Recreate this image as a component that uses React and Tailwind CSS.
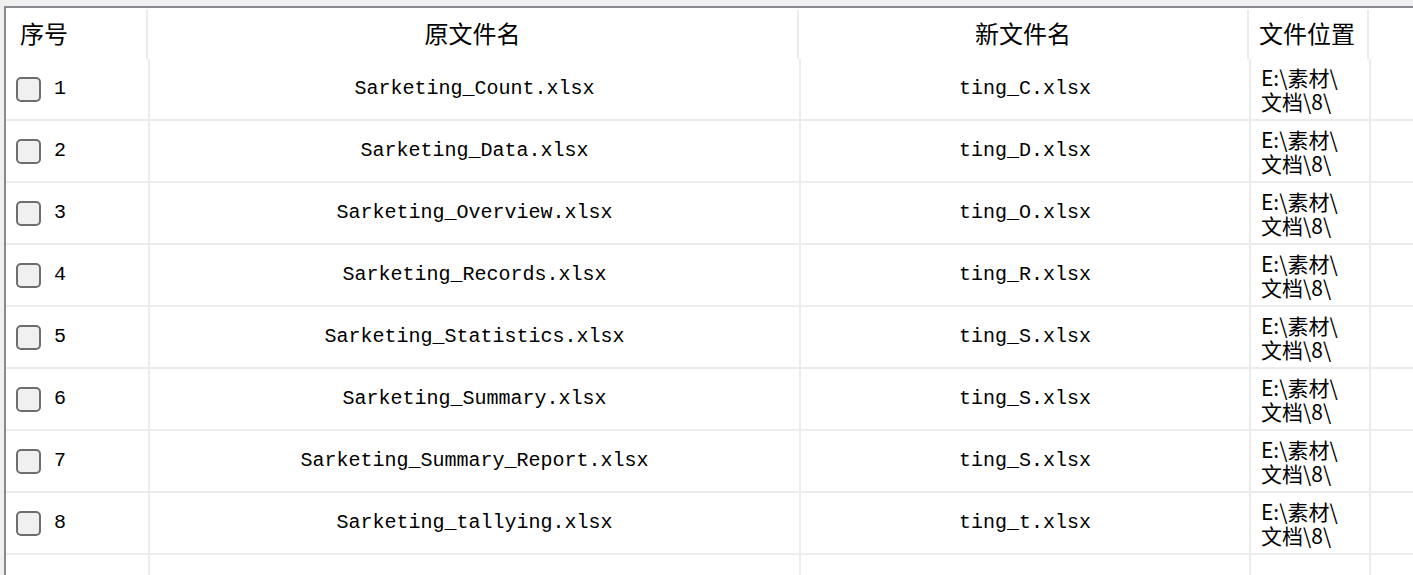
import React from "react";

const rows = [
  { no: 1, src: "Sarketing_Count.xlsx", dst: "ting_C.xlsx" },
  { no: 2, src: "Sarketing_Data.xlsx", dst: "ting_D.xlsx" },
  { no: 3, src: "Sarketing_Overview.xlsx", dst: "ting_O.xlsx" },
  { no: 4, src: "Sarketing_Records.xlsx", dst: "ting_R.xlsx" },
  { no: 5, src: "Sarketing_Statistics.xlsx", dst: "ting_S.xlsx" },
  { no: 6, src: "Sarketing_Summary.xlsx", dst: "ting_S.xlsx" },
  { no: 7, src: "Sarketing_Summary_Report.xlsx", dst: "ting_S.xlsx" },
  { no: 8, src: "Sarketing_tallying.xlsx", dst: "ting_t.xlsx" },
];

const cjk = "font-['Noto_Sans_CJK_SC','Noto_Sans',sans-serif]";
const mono = "font-['Liberation_Mono','DejaVu_Sans_Mono',monospace]";

function Checkbox() {
  return <span className="block w-[25px] h-[25px] rounded-[5px] border-2 border-[#6e6e6e] bg-[#f0f0f0]" />;
}

export default function App() {
  return (
    <div className="w-[1413px] h-[575px] bg-[#f0f0f0] pt-[6px] pl-[4px] overflow-hidden">
      <div className="h-full bg-white border-t-2 border-l-2 border-[#898990] overflow-hidden">
        {/* header */}
        <div className={`flex h-[51px] text-[24px] text-black ${cjk}`}>
          <div className="w-[142px] shrink-0 flex items-center pl-[14px] border-r-2 border-[#ebebeb] mt-[2px] pb-[4px]">序号</div>
          <div className="w-[651px] shrink-0 flex items-center justify-center border-r-2 border-[#ebebeb] mt-[2px] pb-[4px]">原文件名</div>
          <div className="w-[450px] shrink-0 flex items-center justify-center border-r-2 border-[#ebebeb] mt-[2px] pb-[4px]">新文件名</div>
          <div className="w-[120px] shrink-0 flex items-center pl-[10px] border-r-2 border-[#ebebeb] mt-[2px] pb-[4px]">文件位置</div>
          <div className="flex-1" />
        </div>

        {/* body */}
        {rows.map((r) => (
          <div key={r.no} className={`flex h-[62px] border-b-2 border-[#ececec] text-[20px] text-black ${mono}`}>
            <div className="w-[144px] shrink-0 flex items-center pl-[10px] gap-[13px] border-r-2 border-[#ececec]">
              <Checkbox />
              <span>{r.no}</span>
            </div>
            <div className="w-[651px] shrink-0 flex items-center justify-center border-r-2 border-[#ececec]">{r.src}</div>
            <div className="w-[450px] shrink-0 flex items-center justify-center border-r-2 border-[#ececec]">{r.dst}</div>
            <div className={`w-[120px] shrink-0 flex flex-col justify-center pl-[10px] border-r-2 border-[#ececec] text-[21px] leading-[24px] overflow-hidden whitespace-nowrap ${cjk}`}>
              <span>E:\素材\</span>
              <span>文档\8\</span>
            </div>
            <div className="flex-1" />
          </div>
        ))}
        <div className="flex h-[62px]">
          <div className="w-[144px] shrink-0 border-r-2 border-[#ececec]" />
          <div className="w-[651px] shrink-0 border-r-2 border-[#ececec]" />
          <div className="w-[450px] shrink-0 border-r-2 border-[#ececec]" />
          <div className="w-[120px] shrink-0 border-r-2 border-[#ececec]" />
          <div className="flex-1" />
        </div>
      </div>
    </div>
  );
}
